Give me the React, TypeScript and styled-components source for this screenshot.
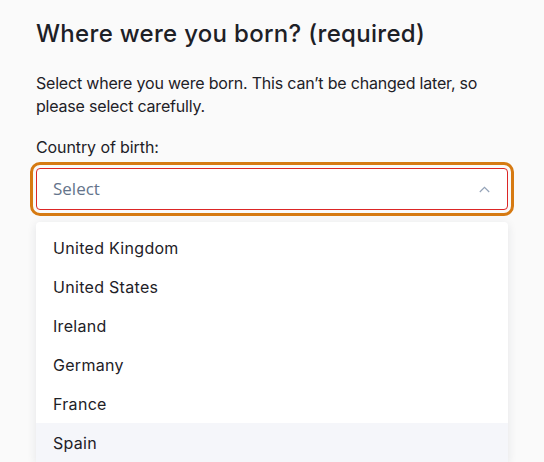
import React from 'react';
import styled, {createGlobalStyle} from 'styled-components';

const GlobalStyle = createGlobalStyle`
	html, body {
		margin: 0;
		padding: 0;
		background: #fafafa;
	}
	body {
		font-family: Inter, 'Noto Sans', sans-serif;
		color: #1e2127;
		overflow: hidden;
	}
	* {
		box-sizing: border-box;
	}
`;

const Page = styled.div`
	padding: 18px 36px 0;
	min-height: 462px;
`;

const Title = styled.h1`
	margin: 0;
	font-size: 24px;
	line-height: 32px;
	font-weight: 500;
	letter-spacing: 0.3px;
	color: #1d2026;
`;

const Intro = styled.p`
	margin: 22px 0 0;
	font-size: 16px;
	line-height: 23px;
	letter-spacing: -0.2px;
`;

const Label = styled.label`
	display: block;
	margin-top: 18px;
	font-size: 16px;
	line-height: 23px;
	letter-spacing: -0.1px;
`;

const SelectBox = styled.div`
	margin-top: 9px;
	height: 42px;
	display: flex;
	align-items: center;
	justify-content: space-between;
	padding: 0 17px 0 16px;
	background: #ffffff;
	border: 1px solid #dc2626;
	border-radius: 4px;
	outline: 3px solid #d67a12;
	outline-offset: 3px;
`;

const Placeholder = styled.span`
	font-family: 'Open Sans', sans-serif;
	font-size: 17px;
	color: #64748b;
	margin-top: -2px;
`;

const Menu = styled.ul`
	list-style: none;
	margin: 12px 0 0;
	padding: 6px 0 0;
	background: #ffffff;
	border-radius: 4px 4px 0 0;
	box-shadow: 0 2px 10px rgba(30, 41, 59, 0.1);
`;

const Option = styled.li<{active?: boolean}>`
	height: 39px;
	display: flex;
	align-items: center;
	padding: 0 16px 0 17px;
	font-size: 16px;
	letter-spacing: 0.3px;
	color: #1e2127;
	background: ${(props) => (props.active ? '#f5f6fa' : '#ffffff')};
`;

const countries = [
	'United Kingdom',
	'United States',
	'Ireland',
	'Germany',
	'France',
	'Spain',
];

const Chevron: React.FC = () => (
	<svg width='11' height='7' viewBox='0 0 11 7' fill='none'>
		<polyline
			points='0.8,6 5.5,1.3 10.2,6'
			stroke='#94a3b8'
			strokeWidth='1.2'
		/>
	</svg>
);

const App: React.FC = () => {
	return (
		<Page>
			<GlobalStyle />
			<Title>Where were you born? (required)</Title>
			<Intro>
				Select where you were born. This can’t be changed later, so please
				select carefully.
			</Intro>
			<Label>Country of birth:</Label>
			<SelectBox>
				<Placeholder>Select</Placeholder>
				<Chevron />
			</SelectBox>
			<Menu>
				{countries.map((c) => (
					<Option key={c} active={c === 'Spain'}>
						{c}
					</Option>
				))}
			</Menu>
		</Page>
	);
};

export default App;
